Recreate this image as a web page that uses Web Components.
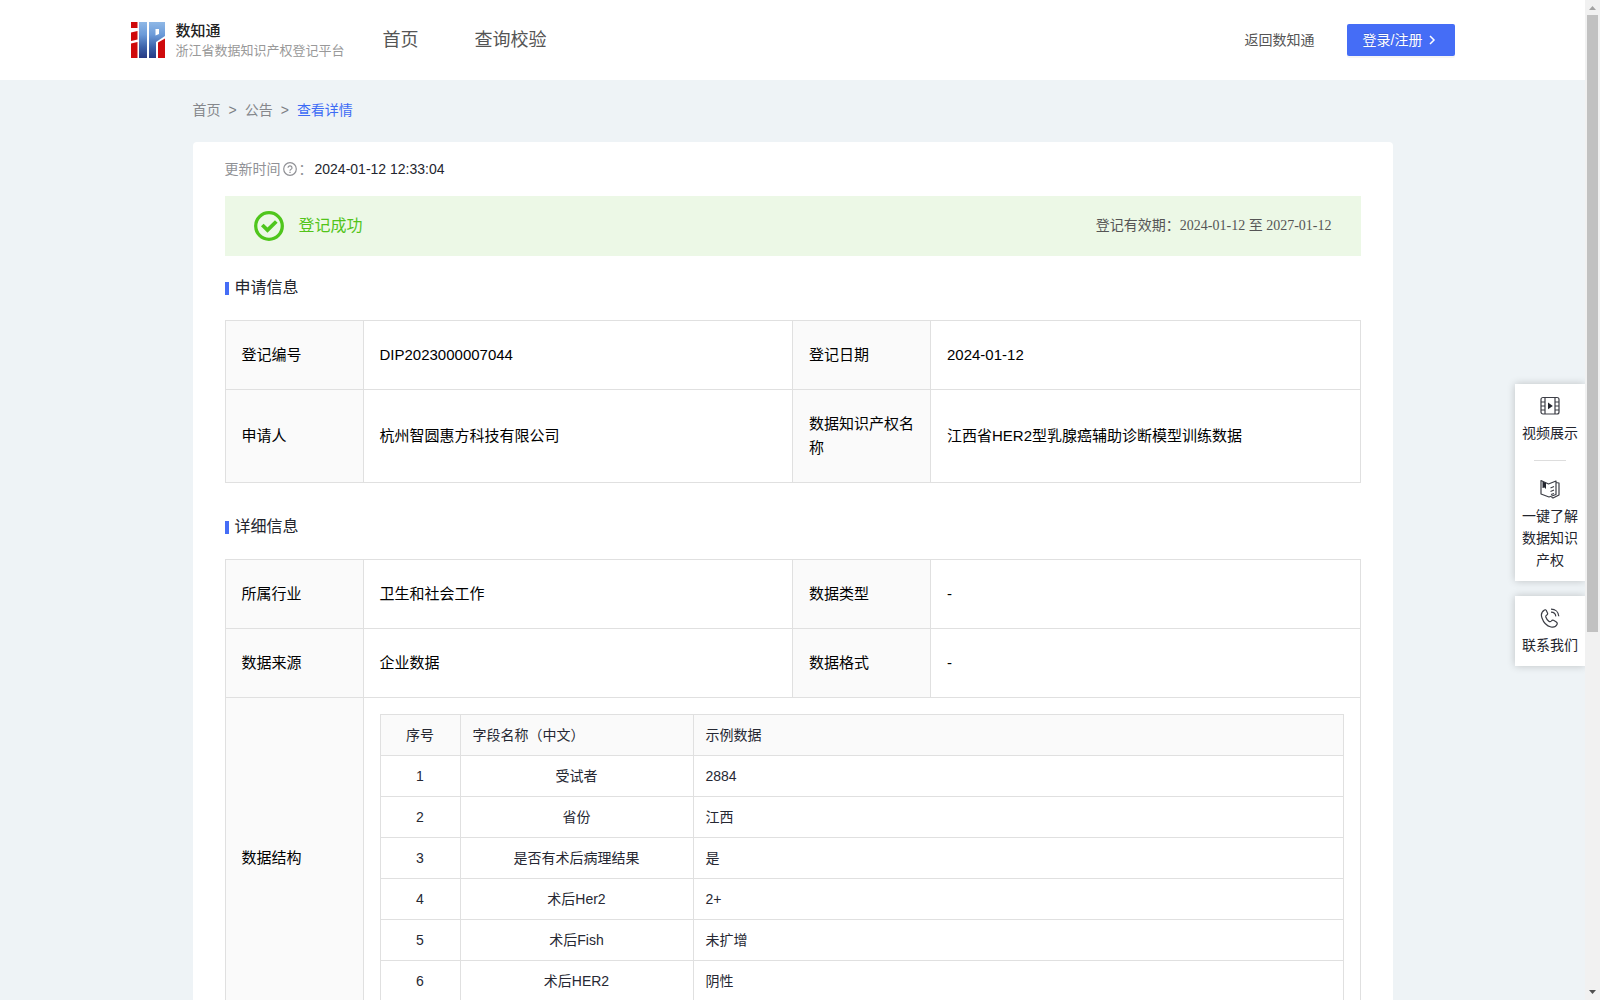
<!DOCTYPE html>
<html lang="zh-CN">
<head>
<meta charset="utf-8">
<title>数知通</title>
<style>
    body {
        margin: 0;
        height: 100vh;
        overflow: hidden;
        background: #eef3f6;
        color: #23252e;
        font: 14px/22px "Liberation Sans", "Noto Sans CJK SC", sans-serif;
    }
</style>
</head>
<body>
<app-shell>
    <site-header slot="header">
        <a href="#home">首页</a>
        <a href="#verify">查询校验</a>
        <a slot="actions" href="#back">返回数知通</a>
    </site-header>
    <bread-crumb>
        <a href="#home">首页</a>
        <a href="#notice">公告</a>
        <a href="#detail" aria-current="page">查看详情</a>
    </bread-crumb>
    <detail-card>
        <update-time>2024-01-12 12:33:04</update-time>
        <status-banner>
            登记成功
            <span slot="period">登记有效期：2024-01-12 至 2027-01-12</span>
        </status-banner>
        <section-title>申请信息</section-title>
        <info-table id="apply"></info-table>
        <section-title>详细信息</section-title>
        <info-table id="detail">
            <field-table slot="wide"></field-table>
        </info-table>
    </detail-card>
    <side-dock slot="dock"></side-dock>
</app-shell>

<script>
// Page frame: scrolling content on the left, scroll track on the right
class AppShell extends HTMLElement {
    constructor() {
        super();
        this.attachShadow({ mode: 'open' });
        this.shadowRoot.innerHTML = `
        <style>
            :host {
                display: flex;
                height: 100%;
            }
            .content {
                flex: 1;
                min-width: 0;
                overflow-y: auto;
                scrollbar-width: none;
            }
            main {
                box-sizing: border-box;
                max-width: 1200px;
                margin: 0 auto;
                padding-bottom: 40px;
            }
            .track {
                display: flex;
                flex-direction: column;
                align-items: center;
                width: 15px;
                background: #f1f1f1;
            }
            .track svg {
                display: block;
                width: 15px;
                height: 15px;
            }
            .thumb {
                width: 11px;
                flex: 0 0 auto;
                height: calc((100% - 30px) * 0.636);
                background: #c1c1c1;
            }
            .space {
                flex: 1;
            }
        </style>
        <div class="content">
            <slot name="header"></slot>
            <main><slot></slot></main>
        </div>
        <div class="track" aria-hidden="true">
            <svg viewBox="0 0 15 15"><path d="M4 10h7L7.500 6z" fill="#a3a3a3"/></svg>
            <div class="thumb"></div>
            <div class="space"></div>
            <svg viewBox="0 0 15 15"><path d="M4 5h7L7.500 9z" fill="#505050"/></svg>
        </div>
        <slot name="dock"></slot>
        `;
    }
}
customElements.define('app-shell', AppShell);

class SiteLogo extends HTMLElement {
    constructor() {
        super();
        this.attachShadow({ mode: 'open' });
        this.shadowRoot.innerHTML = `
        <style>
            :host {
                display: flex;
                align-items: center;
                gap: 11px;
            }
            svg {
                width: 34px;
                height: 36px;
            }
            .text {
                padding-top: 2px;
                line-height: 20px;
            }
            .name {
                font-size: 15px;
                font-weight: 500;
                color: #222;
            }
            .sub {
                font-size: 13px;
                color: #999;
            }
        </style>
        <svg viewBox="0 0 34 36" aria-hidden="true">
            <defs>
                <linearGradient id="blue" x1="0" y1="0" x2="0" y2="36" gradientUnits="userSpaceOnUse">
                    <stop offset="0" stop-color="#8fb8e6"/>
                    <stop offset="0.35" stop-color="#6c9bd9"/>
                    <stop offset="0.7" stop-color="#3c62a9"/>
                    <stop offset="1" stop-color="#273a83"/>
                </linearGradient>
            </defs>
            <path d="M0 0h6.500v6H0zM0 10.500l6.500-1.500v8.500L0 19zM0 21.500l6.500-1.500v16H0zM27 20.500l7-4V36h-7z" fill="#cf0a0c"/>
            <path d="M8 0h8v36H8zM18 0h16v14l-9 6v16h-7zM24.500 7v6.500l3.500-1.500V7z" fill="url(#blue)" fill-rule="evenodd"/>
        </svg>
        <div class="text">
            <div class="name">数知通</div>
            <div class="sub">浙江省数据知识产权登记平台</div>
        </div>
        `;
    }
}
customElements.define('site-logo', SiteLogo);

class SiteHeader extends HTMLElement {
    constructor() {
        super();
        this.attachShadow({ mode: 'open' });
        this.shadowRoot.innerHTML = `
        <style>
            :host {
                display: block;
                background: #fff;
            }
            header {
                display: flex;
                align-items: center;
                max-width: 1324px;
                height: 80px;
                margin: 0 auto;
            }
            nav {
                display: flex;
                gap: 56px;
                margin-left: 38px;
                font-size: 18px;
            }
            ::slotted(a) {
                color: #555;
                text-decoration: none;
            }
            .actions {
                display: flex;
                align-items: center;
                gap: 32px;
                margin-left: auto;
            }
            button {
                display: flex;
                align-items: center;
                gap: 4px;
                height: 32px;
                padding: 0 18px 0 16px;
                border: 0;
                border-radius: 2px;
                background: #456df6;
                color: #fff;
                font: inherit;
                text-shadow: 0 -1px 0 rgba(0, 0, 0, 0.12);
                box-shadow: 0 2px 0 rgba(0, 0, 0, 0.04);
                cursor: pointer;
            }
            button svg {
                width: 10px;
                height: 10px;
            }
        </style>
        <header>
            <site-logo></site-logo>
            <nav><slot></slot></nav>
            <div class="actions">
                <slot name="actions"></slot>
                <button type="button">登录/注册
                    <svg viewBox="0 0 10 10" fill="none" stroke="#fff" stroke-width="1.500" aria-hidden="true"><path d="M3 1l4 4-4 4"/></svg>
                </button>
            </div>
        </header>
        `;
    }
}
customElements.define('site-header', SiteHeader);

class BreadCrumb extends HTMLElement {
    constructor() {
        super();
        this.attachShadow({ mode: 'open' });
    }

    connectedCallback() {
        const links = [...this.querySelectorAll('a')];
        const items = links.map((a, i) => {
            a.slot = 'item' + i;
            const sep = i ? '<span>&gt;</span>' : '';
            return `${sep}<slot name="item${i}"></slot>`;
        });
        this.shadowRoot.innerHTML = `
        <style>
            :host {
                display: block;
                padding: 20px 0 22px;
                line-height: 20px;
                color: #7d7f84;
            }
            nav {
                display: flex;
                gap: 8px;
            }
            ::slotted(a) {
                color: #85878c;
                text-decoration: none;
            }
            ::slotted(a[aria-current]) {
                color: #3d6bf5;
            }
        </style>
        <nav aria-label="breadcrumb">${items.join('')}</nav>
        `;
    }
}
customElements.define('bread-crumb', BreadCrumb);

class DetailCard extends HTMLElement {
    constructor() {
        super();
        this.attachShadow({ mode: 'open' });
        this.shadowRoot.innerHTML = `
        <style>
            :host {
                display: block;
                padding: 16px 32px 32px;
                border-radius: 4px;
                background: #fff;
            }
        </style>
        <slot></slot>
        `;
    }
}
customElements.define('detail-card', DetailCard);

class UpdateTime extends HTMLElement {
    constructor() {
        super();
        this.attachShadow({ mode: 'open' });
        this.shadowRoot.innerHTML = `
        <style>
            :host {
                display: flex;
                align-items: center;
                margin-bottom: 16px;
            }
            .label {
                display: flex;
                align-items: center;
                gap: 2px;
                width: 90px;
                color: #909196;
            }
            svg {
                width: 14px;
                height: 14px;
            }
        </style>
        <span class="label">更新时间<svg viewBox="0 0 14 14" fill="none" stroke="#909196" aria-hidden="true">
            <circle cx="7" cy="7" r="6.300" stroke-width="1.200"/>
            <path d="M5 5.700a2 1.900 0 1 1 2.800 1.800q-.8.400-.8 1.200" stroke-width="1.200"/>
            <path d="M7 9.700v1.200" stroke-width="1.300"/>
        </svg>：</span>
        <span><slot></slot></span>
        `;
    }
}
customElements.define('update-time', UpdateTime);

class StatusBanner extends HTMLElement {
    constructor() {
        super();
        this.attachShadow({ mode: 'open' });
        this.shadowRoot.innerHTML = `
        <style>
            :host {
                display: flex;
                align-items: center;
                height: 60px;
                padding: 0 29px;
                background: #ecf8e6;
            }
            svg {
                width: 30px;
                height: 30px;
                margin-right: 15px;
            }
            .state {
                color: #52c41a;
                font-size: 16px;
            }
            .period {
                margin-left: auto;
                color: #555;
                font-family: "Liberation Serif", "Noto Sans CJK SC", serif;
            }
        </style>
        <svg viewBox="0 0 30 30" fill="none" stroke="#4fc61c" aria-hidden="true">
            <circle cx="15" cy="15" r="13.300" stroke-width="3.300"/>
            <path d="M8.300 14l5.200 5 8.800-8.500" stroke-width="3.800"/>
        </svg>
        <span class="state"><slot></slot></span>
        <span class="period"><slot name="period"></slot></span>
        `;
    }
}
customElements.define('status-banner', StatusBanner);

class SectionTitle extends HTMLElement {
    constructor() {
        super();
        this.attachShadow({ mode: 'open' });
        this.shadowRoot.innerHTML = `
        <style>
            :host {
                display: block;
                margin: 20px 0;
            }
            h2 {
                display: flex;
                align-items: center;
                gap: 6px;
                margin: 0;
                font-size: 16px;
                font-weight: 400;
                line-height: 24px;
            }
            h2::before {
                content: "";
                width: 4px;
                height: 13px;
                background: #456df6;
            }
        </style>
        <h2><slot></slot></h2>
        `;
    }
}
customElements.define('section-title', SectionTitle);

// Label/value grid. Each row is [label, value, label, value];
// a row with only a label takes the slotted content across the other columns.
class InfoTable extends HTMLElement {
    constructor() {
        super();
        this.attachShadow({ mode: 'open' });
    }

    set rows(rows) {
        const body = rows.map(row => {
            if (row.length === 1) {
                return `<tr><th scope="row">${row[0]}</th><td class="wide" colspan="3"><slot name="wide"></slot></td></tr>`;
            }
            return `<tr>
                <th scope="row">${row[0]}</th><td>${row[1]}</td>
                <th scope="row">${row[2]}</th><td>${row[3]}</td>
            </tr>`;
        });
        this.shadowRoot.innerHTML = `
        <style>
            :host {
                display: block;
                margin-bottom: 32px;
            }
            table {
                width: 100%;
                table-layout: fixed;
                border-collapse: collapse;
                color: #000;
                font-size: 15px;
                line-height: 24px;
            }
            .label {
                width: 138px;
            }
            th, td {
                padding: 22px 16px;
                border: 1px solid #e0e0e0;
                text-align: left;
                font-weight: 400;
            }
            th {
                background: #fafafa;
            }
            .wide {
                padding: 16px;
            }
        </style>
        <table>
            <colgroup><col class="label"><col><col class="label"><col></colgroup>
            <tbody>${body.join('')}</tbody>
        </table>
        `;
    }
}
customElements.define('info-table', InfoTable);

class FieldTable extends HTMLElement {
    constructor() {
        super();
        this.attachShadow({ mode: 'open' });
    }

    set fields(fields) {
        const body = fields.map(([name, sample], i) => `
            <tr><td class="mid">${i + 1}</td><td class="mid">${name}</td><td>${sample}</td></tr>
        `);
        this.shadowRoot.innerHTML = `
        <style>
            :host {
                display: block;
            }
            table {
                width: 100%;
                table-layout: fixed;
                border-collapse: collapse;
                color: #262833;
                font-size: 14px;
                line-height: 22px;
            }
            .no {
                width: 80px;
            }
            .name {
                width: 233px;
            }
            th, td {
                padding: 9px 12px;
                border: 1px solid #e0e0e0;
                text-align: left;
                font-weight: 400;
            }
            th {
                background: #fafafa;
            }
            .mid {
                text-align: center;
            }
        </style>
        <table>
            <colgroup><col class="no"><col class="name"><col></colgroup>
            <thead><tr><th class="mid">序号</th><th>字段名称（中文）</th><th>示例数据</th></tr></thead>
            <tbody>${body.join('')}</tbody>
        </table>
        `;
    }
}
customElements.define('field-table', FieldTable);

// Floating shortcuts over the right edge of the page
class SideDock extends HTMLElement {
    constructor() {
        super();
        this.attachShadow({ mode: 'open' });
        this.shadowRoot.innerHTML = `
        <style>
            :host {
                position: absolute;
                top: 384px;
                right: 15px;
                display: flex;
                flex-direction: column;
                gap: 15px;
                width: 70px;
            }
            .box {
                padding: 12px 7px 10px;
                background: #fff;
                box-shadow: 0 0 8px rgba(0, 0, 0, 0.2);
                clip-path: inset(-10px 0 -10px -10px);
            }
            a {
                display: flex;
                flex-direction: column;
                align-items: center;
                gap: 6px;
                color: #23252e;
                text-align: center;
                text-decoration: none;
            }
            svg {
                width: 20px;
                height: 20px;
                fill: none;
                stroke: #3c3e46;
                stroke-width: 1.2;
                stroke-linejoin: round;
            }
            hr {
                width: 32px;
                height: 1px;
                margin: 16px auto 18px;
                border: 0;
                background: #ddd;
            }
        </style>
        <div class="box">
            <a href="#video">
                <svg viewBox="0 0 20 20" aria-hidden="true">
                    <rect x="1" y="1.500" width="18" height="16.500" rx="2"/>
                    <path d="M5 1.500V18M15 1.500V18M1 6h4M1 10h4M1 14h4M15 6h4M15 10h4M15 14h4"/>
                    <path d="M8 6.500l4.800 3.400L8 13.300z" fill="#23252e" stroke="none"/>
                </svg>
                视频展示
            </a>
            <hr>
            <a href="#guide">
                <svg viewBox="0 0 20 20" aria-hidden="true">
                    <path d="M1 1.500l7.500 3.500L16 2v13.500L9 18l-8-3zM16 3.500l3 .5v12l-6 3-1.500-.8"/>
                    <path d="M10.500 9l3.500-1.500M10.500 12.500l3.500-1.500M11 15.500l3-1"/>
                    <path d="M2.500 2.500l3.500 1.500v6L4.500 8.500l-2 .5z" fill="#23252e" stroke="none"/>
                </svg>
                一键了解数据知识产权
            </a>
        </div>
        <div class="box">
            <a href="#contact">
                <svg viewBox="0 0 20 20" aria-hidden="true">
                    <path d="M4.500 2C2 3.500.5 6 2 10c1.500 4.500 5 8 9 9 3 .7 5-.5 6-2.500.7-1.400.2-2-1-2.800l-2.500-1.500c-1-.5-1.600 0-2.200.8-.8 1-1.500 1-2.500.2-1.500-1.200-2.500-2.700-3-4.200-.3-1 .2-1.400 1-2 .8-.5 1-1.200.7-2L6.300 2.600C6 1.700 5.300 1.500 4.500 2z"/>
                    <path d="M11 1.200c4.500 0 7.500 3 7.800 7M11 4.200c3 0 4.600 1.500 4.800 4.200"/>
                </svg>
                联系我们
            </a>
        </div>
        `;
    }
}
customElements.define('side-dock', SideDock);

document.querySelector('#apply').rows = [
    ['登记编号', 'DIP2023000007044', '登记日期', '2024-01-12'],
    ['申请人', '杭州智圆惠方科技有限公司', '数据知识产权名称', '江西省HER2型乳腺癌辅助诊断模型训练数据'],
];

document.querySelector('#detail').rows = [
    ['所属行业', '卫生和社会工作', '数据类型', '-'],
    ['数据来源', '企业数据', '数据格式', '-'],
    ['数据结构'],
];

document.querySelector('field-table').fields = [
    ['受试者', '2884'],
    ['省份', '江西'],
    ['是否有术后病理结果', '是'],
    ['术后Her2', '2+'],
    ['术后Fish', '未扩增'],
    ['术后HER2', '阴性'],
];
</script>
</body>
</html>
